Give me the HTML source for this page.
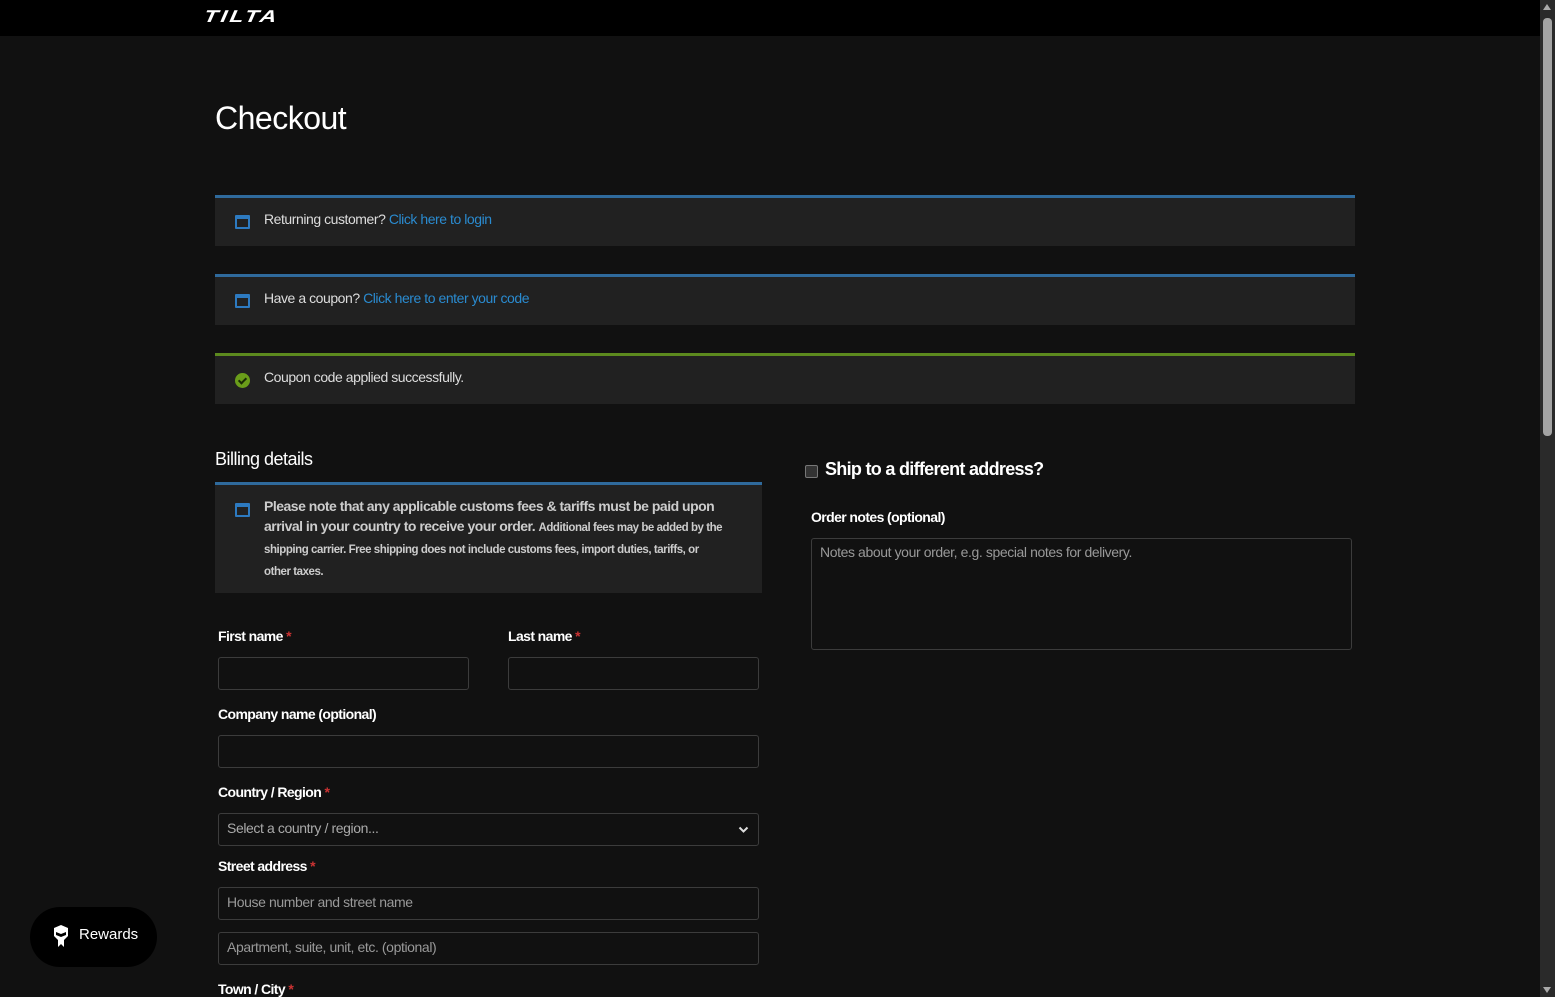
<!DOCTYPE html>
<html><head><meta charset="utf-8"><style>
*{box-sizing:border-box;margin:0;padding:0}
body{width:1555px;height:997px;overflow:hidden;background:#111;font-family:"Liberation Sans",sans-serif;color:#ddd;position:relative}
.a{position:absolute}
.hdr{left:0;top:0;width:1540px;height:36px;background:#000}
.logo{left:204px;top:7px;font-size:17px;font-weight:bold;font-style:italic;color:#fff;letter-spacing:2px;transform:skewX(-10deg) scaleX(1.35);transform-origin:left}
h1{position:absolute;left:215px;top:100px;font-size:32px;font-weight:normal;color:#fff;letter-spacing:-0.5px}
.note{left:215px;width:1140px;height:51px;background:#212121;border-top:3px solid #2f6a9c;font-size:14px;color:#ddd;letter-spacing:-0.45px}
.note span.t{position:absolute;left:49px;top:13px}
.note a{color:#2a8bd0;text-decoration:none}
.ic{position:absolute;left:20px;top:17px;width:15px;height:14px;border:2px solid #2d7ac0;border-top-width:4px;border-radius:1px}
.chk{position:absolute;left:20px;top:17px;width:15px;height:15px;border-radius:50%;background:#6a9d1a}
.chk:after{content:"";position:absolute;left:5px;top:3px;width:3px;height:6px;border:solid #1a2a05;border-width:0 2px 2px 0;transform:rotate(45deg)}
.lbl{font-size:14px;font-weight:bold;color:#fff;letter-spacing:-0.6px}
.lbl b{color:#c33;font-weight:bold}
.inp{border:1px solid #3c3c3c;border-radius:3px;height:33px;background:#111;font-size:14px;color:#999;padding:6px 8px;letter-spacing:-0.4px}
</style></head><body>
<div class="a hdr"></div>
<div class="a logo">TILTA</div>
<h1>Checkout</h1>

<div class="a note" style="top:195px"><div class="ic"></div><span class="t">Returning customer? <a>Click here to login</a></span></div>
<div class="a note" style="top:274px"><div class="ic"></div><span class="t">Have a coupon? <a>Click here to enter your code</a></span></div>
<div class="a note" style="top:353px;border-top-color:#5c8a1e"><div class="chk"></div><span class="t">Coupon code applied successfully.</span></div>

<div class="a" style="left:215px;top:449px;font-size:18px;color:#fff;letter-spacing:-0.5px">Billing details</div>
<div class="a" style="left:215px;top:482px;width:547px;height:111px;background:#212121;border-top:3px solid #2f6a9c">
<div class="ic" style="top:18px"></div>
<div style="position:absolute;left:49px;top:11px;width:462px;font-size:14px;font-weight:bold;color:#ccc;line-height:20px;letter-spacing:-0.5px">Please note that any applicable customs fees &amp; tariffs must be paid upon arrival in your country to receive your order. <span style="font-size:11.5px;letter-spacing:-0.45px">Additional fees may be added by the shipping carrier. Free shipping does not include customs fees, import duties, tariffs, or other taxes.</span></div>
</div>

<div class="a lbl" style="left:218px;top:628px">First name <b>*</b></div>
<div class="a lbl" style="left:508px;top:628px">Last name <b>*</b></div>
<div class="a inp" style="left:218px;top:657px;width:251px"></div>
<div class="a inp" style="left:508px;top:657px;width:251px"></div>
<div class="a lbl" style="left:218px;top:706px">Company name (optional)</div>
<div class="a inp" style="left:218px;top:735px;width:541px"></div>
<div class="a lbl" style="left:218px;top:784px">Country / Region <b>*</b></div>
<div class="a inp" style="left:218px;top:813px;width:541px;color:#aaa">Select a country / region...
<svg style="position:absolute;right:9px;top:12px" width="11" height="8" viewBox="0 0 11 8"><path d="M1.5 1.5 L5.5 5.5 L9.5 1.5" stroke="#ddd" stroke-width="2" fill="none"/></svg></div>
<div class="a lbl" style="left:218px;top:858px">Street address <b>*</b></div>
<div class="a inp" style="left:218px;top:887px;width:541px">House number and street name</div>
<div class="a inp" style="left:218px;top:932px;width:541px">Apartment, suite, unit, etc. (optional)</div>
<div class="a lbl" style="left:218px;top:981px">Town / City <b>*</b></div>

<div class="a" style="left:805px;top:465px;width:13px;height:13px;border:1px solid #777;border-radius:2px;background:#333"></div>
<div class="a" style="left:825px;top:459px;font-size:18px;font-weight:bold;color:#fff;letter-spacing:-0.7px">Ship to a different address?</div>
<div class="a lbl" style="left:811px;top:509px">Order notes (optional)</div>
<div class="a inp" style="left:811px;top:538px;width:541px;height:112px;padding:5px 8px">Notes about your order, e.g. special notes for delivery.</div>

<div class="a" style="left:30px;top:907px;width:127px;height:60px;border-radius:30px;background:#000"></div>
<svg class="a" style="left:52px;top:924px" width="18" height="24" viewBox="0 0 18 24"><path d="M9 1 L16 4 L16 12 L12 16 L12 23 L9 20 L6 23 L6 16 L2 12 L2 4 Z" fill="#fff"/><path d="M4 8 L9 10 L14 8 L14 11 L9 13 L4 11 Z" fill="#000"/></svg>
<div class="a" style="left:79px;top:926px;font-size:15px;color:#fff">Rewards</div>

<div class="a" style="left:1540px;top:0;width:15px;height:997px;background:#2a2a2a"></div>
<div class="a" style="left:1543px;top:18px;width:9px;height:418px;background:#a3a3a3;border-radius:4px"></div>
<div class="a" style="left:1543px;top:4px;width:0;height:0;border-left:4.5px solid transparent;border-right:4.5px solid transparent;border-bottom:6px solid #aaa"></div>
<div class="a" style="left:1543px;top:987px;width:0;height:0;border-left:4.5px solid transparent;border-right:4.5px solid transparent;border-top:6px solid #aaa"></div>
</body></html>
